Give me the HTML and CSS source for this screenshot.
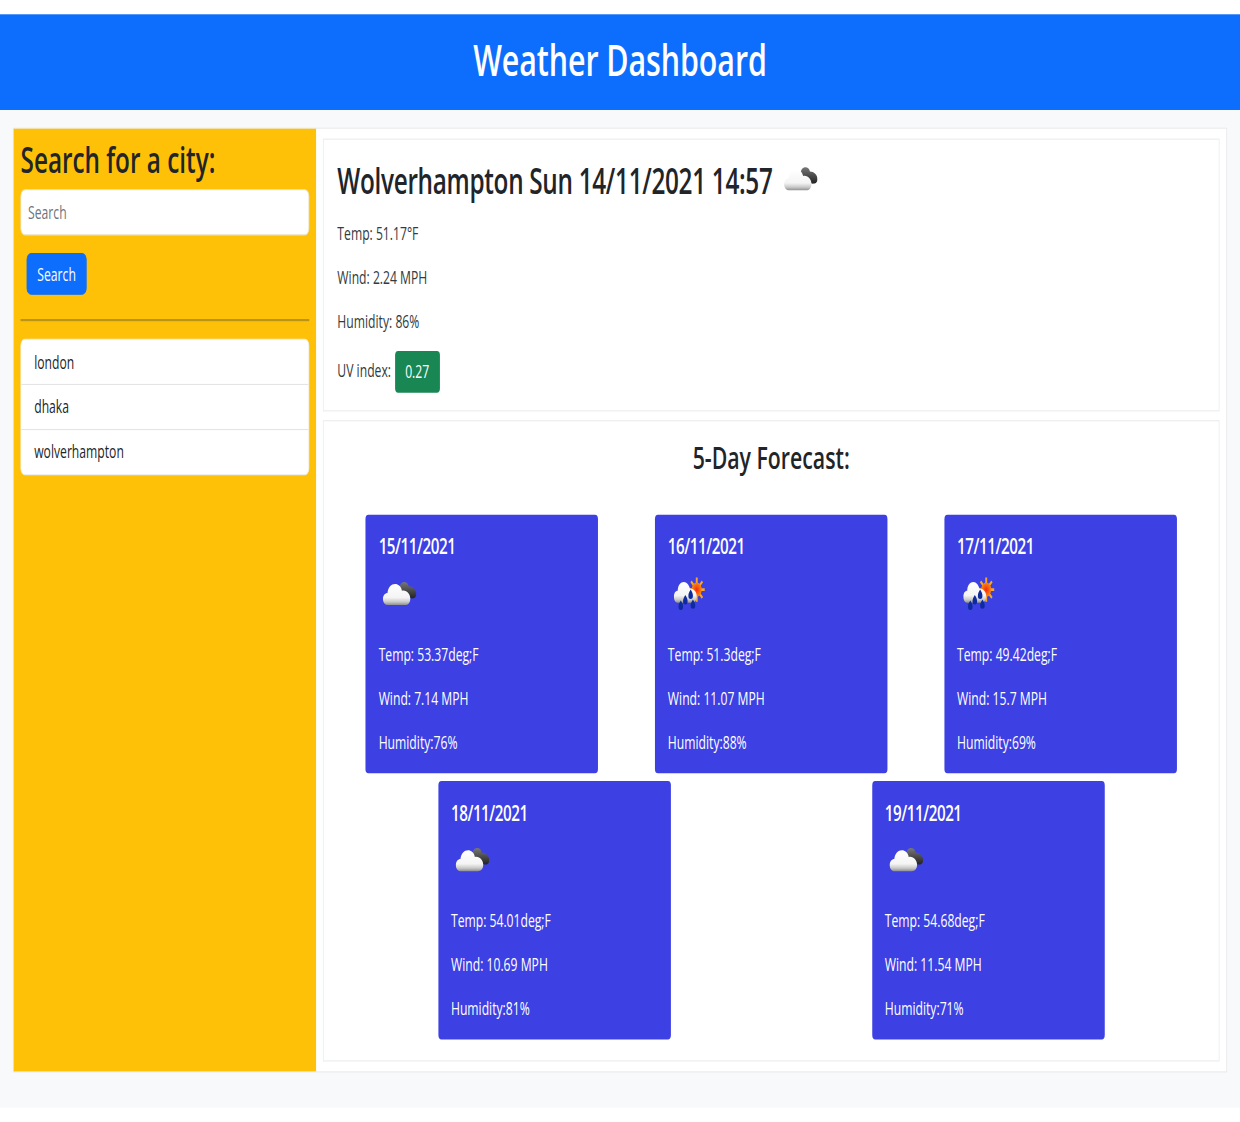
FILE: index.html
```html
<!DOCTYPE html>
<html lang="en">
<head>
<meta charset="utf-8">
<title>Weather Dashboard</title>
<link rel="stylesheet" href="styles.css">
</head>
<body>
<svg class="defs" width="0" height="0">
  <defs>
    <linearGradient id="white-fade" x1="0" y1="0" x2="0" y2="1">
      <stop offset="0" stop-color="#ffffff"/>
      <stop offset=".65" stop-color="#f4f4f4"/>
      <stop offset=".85" stop-color="#c9c9c9"/>
      <stop offset="1" stop-color="#8f8f8f"/>
    </linearGradient>
    <linearGradient id="dark-fade" x1="0" y1="0" x2="0" y2="1">
      <stop offset="0" stop-color="#777777"/>
      <stop offset="1" stop-color="#222222"/>
    </linearGradient>
    <radialGradient id="sun-fade">
      <stop offset="0" stop-color="#f42a10"/>
      <stop offset="1" stop-color="#f98a10"/>
    </radialGradient>
    <symbol id="clouds" viewBox="0 0 50 50">
      <path fill="url(#dark-fade)" d="M28 18c0-3 3-5 6-5 3 0 5 1 6 4 5 0 10 3 10 7 0 3-3 4-6 4-4 0-6-2-8-2-4-1-8-4-8-8z"/>
      <path fill="url(#white-fade)" d="M13 34c-4 0-7-2-7-5.500s3-5.500 6-5.500c1-5 5-8 10-8 4 0 8 2 9 6 6-1 11 3 11 7s-3 6-7 6z"/>
    </symbol>
    <symbol id="sunrain" viewBox="0 0 50 50">
      <g stroke="#f9a825" stroke-width="2.500">
        <path d="M38 9v22M27.500 20h21M30.500 12.500l15 15M45.500 12.500l-15 15"/>
      </g>
      <circle cx="38" cy="20" r="6.500" fill="url(#sun-fade)"/>
      <path fill="url(#white-fade)" d="M14 32c-4 0-6-2-6-5.500s2-5.500 5-5.500c0-5 4-8 8-8 4 0 7 3 8 6 5 0 9 3 9 7s-3 6-7 6z"/>
      <path fill="#0d2a9e" d="M17 30c2 2 3 4 3 5.500a3 3 0 0 1-6 0c0-1.500 1-3.500 3-5.500zM33 29c2 2 3 4 3 5.500a3 3 0 0 1-6 0c0-1.500 1-3.500 3-5.500z"/>
      <path fill="#0d2a9e" d="M23 25c2 2 3 4 3 5.500a3 3 0 0 1-6 0c0-1.500 1-3.500 3-5.500zM30 20c2 2 3 4 3 5.500a3 3 0 0 1-6 0c0-1.500 1-3.500 3-5.500z"/>
    </symbol>
  </defs>
</svg>

<div class="frame">
<div class="page">
  <header class="topbar">
    <h1>Weather Dashboard</h1>
  </header>

  <div class="stage">
    <div class="panel">
      <aside class="sidebar">
        <h2>Search for a city:</h2>
        <input class="search-input" type="text" placeholder="Search">
        <button class="search-btn" type="button">Search</button>
        <hr class="rule">
        <ul class="history">
          <li>london</li>
          <li>dhaka</li>
          <li>wolverhampton</li>
        </ul>
      </aside>

      <main class="content">
        <section class="box today">
          <h2 class="today-title">Wolverhampton Sun 14/11/2021 14:57 <svg class="today-icon"><use href="#clouds"/></svg></h2>
          <p>Temp: 51.17°F</p>
          <p>Wind: 2.24 MPH</p>
          <p>Humidity: 86%</p>
          <p class="uv">UV index: <span class="uv-badge">0.27</span></p>
        </section>

        <section class="box forecast">
          <h3>5-Day Forecast:</h3>
          <div class="cards">
            <div class="card">
              <h5>15/11/2021</h5>
              <svg class="card-icon"><use href="#clouds"/></svg>
              <p>Temp: 53.37deg;F</p>
              <p>Wind: 7.14 MPH</p>
              <p>Humidity:76%</p>
            </div>
            <div class="card">
              <h5>16/11/2021</h5>
              <svg class="card-icon"><use href="#sunrain"/></svg>
              <p>Temp: 51.3deg;F</p>
              <p>Wind: 11.07 MPH</p>
              <p>Humidity:88%</p>
            </div>
            <div class="card">
              <h5>17/11/2021</h5>
              <svg class="card-icon"><use href="#sunrain"/></svg>
              <p>Temp: 49.42deg;F</p>
              <p>Wind: 15.7 MPH</p>
              <p>Humidity:69%</p>
            </div>
            <div class="card">
              <h5>18/11/2021</h5>
              <svg class="card-icon"><use href="#clouds"/></svg>
              <p>Temp: 54.01deg;F</p>
              <p>Wind: 10.69 MPH</p>
              <p>Humidity:81%</p>
            </div>
            <div class="card">
              <h5>19/11/2021</h5>
              <svg class="card-icon"><use href="#clouds"/></svg>
              <p>Temp: 54.68deg;F</p>
              <p>Wind: 11.54 MPH</p>
              <p>Humidity:71%</p>
            </div>
          </div>
        </section>
      </main>
    </div>
  </div>
</div>
</div>
</body>
</html>
```

FILE: styles.css
```css
html, body { margin: 0; background: #fff; }
body { font-family: "Open Sans", "Noto Sans", sans-serif; font-size: 16px; line-height: 24px; color: #212529; }
.defs { position: absolute; }

/* the reference is a stretched capture: narrow and tall */
.frame { width: 1240px; height: 1122px; overflow: hidden; }
.page { width: 1632px; transform: scale(.759804, 1.1); transform-origin: 0 0; padding-top: 13px; box-sizing: border-box; }

.topbar { height: 87px; padding-bottom: 6px; box-sizing: border-box; background: #0d6efd; display: flex; align-items: center; justify-content: center; }
.topbar h1 { margin: 0; font-size: 40px; line-height: 48px; font-weight: 600; letter-spacing: -.1px; color: #fff; }

.stage { background: #f8f9fa; padding: 16px 17px 32px; }
.panel { display: flex; height: 859px; background: #fff; border: 1px solid #e6e8ea; box-sizing: border-box; }

.sidebar { width: 398px; flex: none; background: #ffc107; padding: 9px; box-sizing: border-box; }
.sidebar h2 { margin: 0 0 8px; font-size: 32px; line-height: 38px; font-weight: 600; }
.search-input { display: block; width: 100%; height: 42px; box-sizing: border-box; padding: 6px 9px; border: 1px solid #e9e4d0; border-radius: 6px; font: inherit; background: #fff; }
.search-input::placeholder { color: #6c757d; }
.search-btn { display: block; width: 79px; height: 38px; margin: 16px 0 0 8px; border: 1px solid #0d6efd; border-radius: 6px; background: #0d6efd; color: #fff; font: inherit; padding: 0; }
.rule { height: 2px; margin: 22px 0 16px; border: 0; background: #b8941a; }
.history { list-style: none; margin: 0; padding: 0; background: #fff; border: 1px solid #eeeeee; border-radius: 6px; }
.history li { height: 40px; line-height: 39px; padding: 0 17px; border-bottom: 1px solid #e4e4e4; }
.history li:first-child { line-height: 41px; }
.history li:last-child { border-bottom: 0; }

.content { flex: 1; padding: 9px; display: flex; flex-direction: column; gap: 8px; min-width: 0; }
.box { background: #fff; border: 1px solid #e9ebed; box-sizing: border-box; }
.box p { margin: 0 0 16px; }

.today { height: 248px; padding: 18px 18px 0; color: #343a40; }
.today-title { margin: 0 0 17px; font-size: 32px; line-height: 38px; font-weight: 600; letter-spacing: -.4px; color: #212529; display: flex; align-items: center; gap: 9px; }
.today-icon { width: 50px; height: 50px; flex: none; margin: -6px 0; }
.uv { display: flex; align-items: center; gap: 5px; margin-top: -4px !important; }
.uv-badge { display: inline-block; width: 59px; height: 38px; line-height: 38px; margin-top: 3px; text-align: center; background: #198754; color: #fff; border-radius: 4px; }

.forecast { height: 584px; padding: 15px 18px 0; }
.forecast h3 { margin: 0 0 36px; font-size: 28px; line-height: 34px; font-weight: 600; text-align: center; }
.cards { display: flex; flex-wrap: wrap; justify-content: space-around; row-gap: 7px; }
.card { width: 306px; height: 235px; box-sizing: border-box; padding: 17px 17px 0; background: #3d40e2; color: #fff; border-radius: 4px; }
.card h5 { margin: 0 0 7px; font-size: 20px; line-height: 24px; font-weight: 600; letter-spacing: -.6px; }
.card-icon { display: block; width: 50px; height: 50px; margin-bottom: 17px; }
.card p { margin: 0 0 16px; }
```
